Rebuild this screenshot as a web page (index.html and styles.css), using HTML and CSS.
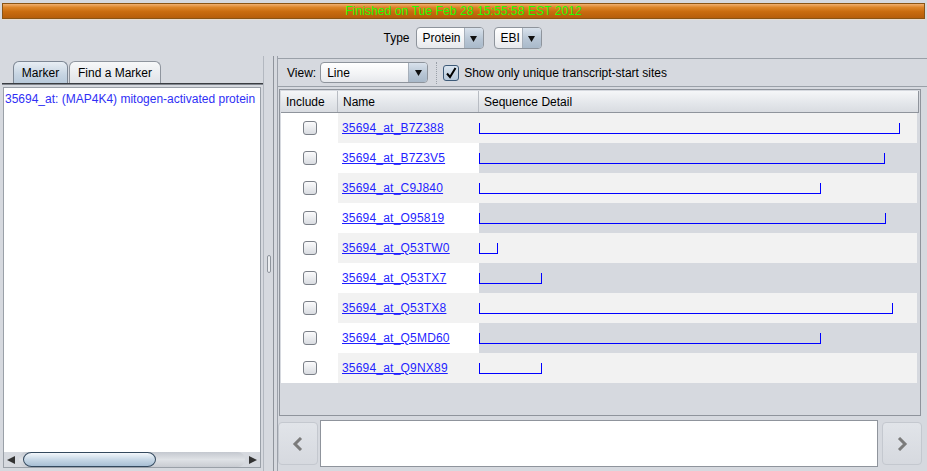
FILE: index.html
```html
<!DOCTYPE html>
<html>
<head>
<meta charset="utf-8">
<link rel="stylesheet" href="styles.css">
</head>
<body>
<div class="app">
  <div class="status"><span>Finished on Tue Feb 28 15:55:58 EST 2012</span></div>
  <div class="typebar">
    <span class="lbl">Type</span>
    <div class="combo w-protein"><span class="ctext">Protein</span><span class="carrow"><svg width="7" height="7" viewBox="0 0 7 7"><path d="M0 1h7L3.5 7z" fill="#111"/></svg></span></div>
    <div class="combo w-ebi"><span class="ctext">EBI</span><span class="carrow"><svg width="7" height="7" viewBox="0 0 7 7"><path d="M0 1h7L3.5 7z" fill="#111"/></svg></span></div>
  </div>
  <div class="split">
    <div class="left">
      <div class="tabs">
        <div class="tab sel">Marker</div>
        <div class="tab">Find a Marker</div>
      </div>
      <div class="tabline"></div>
      <div class="listbox">
        <div class="list">
          <div class="item">35694_at: (MAP4K4) mitogen-activated protein</div>
        </div>
        <div class="hscroll">
          <span class="sarrow"><svg width="8" height="8" viewBox="0 0 8 8"><path d="M0 4L8 0v8z" fill="#333"/></svg></span>
          <div class="track"><div class="thumb"></div></div>
          <span class="sarrow"><svg width="8" height="8" viewBox="0 0 8 8"><path d="M8 4L0 0v8z" fill="#333"/></svg></span>
        </div>
      </div>
    </div>
    <div class="divider"><div class="grip"></div></div>
    <div class="right">
      <div class="toolbar">
        <span class="lbl">View:</span>
        <div class="combo w-line"><span class="ctext">Line</span><span class="carrow"><svg width="7" height="7" viewBox="0 0 7 7"><path d="M0 1h7L3.5 7z" fill="#111"/></svg></span></div>
        <div class="sep"></div>
        <span class="check on"><svg width="12" height="12" viewBox="0 0 12 12"><path d="M2 6.5l3 3.5L10.5 1" fill="none" stroke="#000" stroke-width="2"/></svg></span>
        <span class="cblabel">Show only unique transcript-start sites</span>
      </div>
      <div class="tablewrap">
        <div class="grid">
          <div class="hd">Include</div><div class="hd">Name</div><div class="hd last">Sequence Detail</div>
        </div>
        <div class="rows" id="rows"></div>
      </div>
      <div class="bottom">
        <div class="navbtn"><svg width="12" height="14" viewBox="0 0 12 14"><path d="M9 1L3 7l6 6" fill="none" stroke="#7b7b7b" stroke-width="3"/></svg></div>
        <div class="textarea"></div>
        <div class="navbtn"><svg width="12" height="14" viewBox="0 0 12 14"><path d="M3 1l6 6-6 6" fill="none" stroke="#7b7b7b" stroke-width="3"/></svg></div>
      </div>
    </div>
  </div>
</div>
<script src="app.js"></script>
</body>
</html>
```
FILE: app.js
```js
var data = [
  ["35694_at_B7Z388", 421],
  ["35694_at_B7Z3V5", 406],
  ["35694_at_C9J840", 342],
  ["35694_at_O95819", 407],
  ["35694_at_Q53TW0", 19],
  ["35694_at_Q53TX7", 63],
  ["35694_at_Q53TX8", 414],
  ["35694_at_Q5MD60", 342],
  ["35694_at_Q9NX89", 63]
];
var rows = document.getElementById('rows');
data.forEach(function (d, i) {
  var r = document.createElement('div');
  r.className = 'row ' + (i % 2 ? 'even' : 'odd');
  r.innerHTML =
    '<div class="c inc"><span class="check"></span></div>' +
    '<div class="c name"><a href="#">' + d[0] + '</a></div>' +
    '<div class="c det"><span class="bracket" style="width:' + d[1] + 'px"></span></div>';
  rows.appendChild(r);
});
```
FILE: styles.css
```css
* { box-sizing: border-box; }
html, body { margin: 0; padding: 0; }
body {
  width: 927px; height: 471px; overflow: hidden;
  background: #d6d9df;
  font-family: "Liberation Sans", Arial, sans-serif;
  font-size: 12px; color: #000;
}
.app { display: flex; flex-direction: column; height: 471px; }

.status {
  margin: 3px 2px 0 2px; height: 16px;
  border: 1px solid #8a5414;
  background: linear-gradient(#f0b070 0%, #dc8428 25%, #c96c0e 55%, #b65e0a 100%);
  display: flex; align-items: center; justify-content: center;
  box-shadow: 0 1px 0 #e8dccd;
}
.status span { color: #22ff00; font-size: 12px; letter-spacing: 0.1px; line-height: 14px; }

.typebar {
  margin-top: 8px; height: 22px;
  display: flex; align-items: center; justify-content: center;
  padding-right: 2px;
}
.typebar .lbl { margin-right: 6px; }
.combo {
  height: 22px; border: 1px solid #8e949c; border-radius: 4px;
  display: flex; align-items: stretch; overflow: hidden;
  background: linear-gradient(#ffffff, #f2f3f5 60%, #e6e8ec);
}
.combo .ctext { flex: 1; padding-left: 6px; display: flex; align-items: center; }
.combo .carrow {
  width: 19px; display: flex; align-items: center; justify-content: center;
  border-left: 1px solid #a6afba;
  background: linear-gradient(#d9e2ec, #b8c6d5 55%, #a9b9ca);
}
.w-protein { width: 68px; }
.w-ebi { width: 48px; margin-left: 10px; }
.w-line { width: 108px; height: 21px; }

.split { flex: 1; display: flex; margin-top: 7px; }
.left { width: 263px; display: flex; flex-direction: column; padding-top: 5px; }
.tabs { display: flex; padding-left: 13px; height: 22px; }
.tab {
  height: 22px; padding: 0 8px; display: flex; align-items: center;
  border: 1px solid #8f959e; border-bottom: none; border-radius: 6px 6px 0 0;
  background: linear-gradient(#f7f8f9, #e0e3e8);
  margin-right: 1px;
}
.tab.sel {
  width: 55px; justify-content: center;
  background: linear-gradient(#e8eef4, #c6d4e2 60%, #b9cadb);
  border-color: #7d8794;
}
.tabline { height: 2px; margin: 0 0 0 2px; background: #3a3d42; border-bottom: 1px solid #82878f; }
.listbox {
  flex: 1; margin: 2px 2px 3px 3px;
  border: 1px solid #9aa0a8; background: #fff;
  display: flex; flex-direction: column;
}
.list { flex: 1; padding: 4px 1px; }
.item { color: #2f2ff5; line-height: 14px; white-space: nowrap; }
.hscroll { height: 15px; display: flex; align-items: center; background: #d6d9df; }
.sarrow { width: 14px; display: flex; justify-content: center; align-items: center; }
.track {
  flex: 1; height: 15px; border-radius: 8px; margin: 0 1px;
  background: linear-gradient(#c4c8cf, #dfe2e6 50%, #c9ccd2);
}
.thumb {
  width: 133px; height: 15px; margin-left: 4px; border-radius: 9px / 8px;
  border: 1px solid #34495e;
  background: linear-gradient(#f3f7fb, #c8d8e6 50%, #a8bfd4);
}

.divider { width: 10px; display: flex; align-items: center; justify-content: center; border-left: 1px solid #b3b8c0; }
.grip { width: 4px; height: 18px; border: 1px solid #8e949c; border-radius: 2px; background: #eceef1; }

.right {
  flex: 1; display: flex; flex-direction: column;
  border-left: 1px solid #8f949c; padding: 2px 6px 3px 4px;
  box-shadow: inset 3px 0 0 #d6d9df, inset 4px 0 0 #9ca1aa;
}
.toolbar {
  height: 29px; display: flex; align-items: center;
  border-top: 1px solid #9aa0a8; border-bottom: 1px solid #9aa0a8;
  padding-left: 9px;
  margin-right: -6px;
}
.toolbar .lbl { margin-right: 4px; }
.sep { width: 1px; height: 22px; margin: 0 6px 0 8px; border-left: 1px dotted #9aa0a8; }
.check {
  width: 14px; height: 14px; border: 1px solid #7b8088; border-radius: 3px;
  background: linear-gradient(#fbfbfc, #d9dce1);
  display: inline-flex; align-items: center; justify-content: center;
}
.check.on {
  width: 16px; height: 16px; border-color: #3d5a78;
  background: linear-gradient(#dbe5ef, #b7c9db);
}
.cblabel { margin-left: 5px; }

.tablewrap {
  height: 327px; margin-top: 2px; margin-left: 1px;
  border: 1px solid #8f949c; box-shadow: inset 0 0 0 1px #d6d9df;
  padding: 1px;
  background: #d6d9df;
}
.grid {
  display: grid; grid-template-columns: 57px 141px 1fr;
  height: 22px;
  background: linear-gradient(#f5f6f8, #e3e6ea 60%, #d9dce1);
  border-bottom: 1px solid #8f949c;
  border-right: 1px solid #8f949c;
}
.hd { padding-left: 5px; display: flex; align-items: center; border-right: 1px solid #b8bcc3; }
.hd.last { border-right: none; }
.rows { margin-right: 2px; }
.row { display: grid; grid-template-columns: 57px 141px 1fr; height: 30px; }
.c { display: flex; align-items: center; }
.inc { background: #fff; justify-content: center; }
.name { padding-left: 4px; }
.name a { color: #1f1fff; text-decoration: underline; letter-spacing: 0.2px; }
.odd .name, .odd .det { background: #f2f2f2; }
.even .name { background: #fff; }
.even .det { background: #d6d9df; }
.bracket {
  display: block; height: 11px; margin-top: 1px;
  border-left: 1px solid #0000ff; border-right: 1px solid #0000ff;
  box-shadow: inset 0 -1px 0 #0000ff;
}

.bottom { flex: 1; display: flex; gap: 2px; margin-top: 2px; padding-left: 0; margin-right: -1px; }
.navbtn {
  width: 40px; margin: 4px 0 3px; border: 1px solid #c4c8cf; border-radius: 4px;
  background: linear-gradient(#e1e4e9, #d6d9df);
  display: flex; align-items: center; justify-content: center;
}
.textarea { flex: 1; background: #fff; border: 1px solid #8f949c; margin: 2px 2px 1px 0; }
```
